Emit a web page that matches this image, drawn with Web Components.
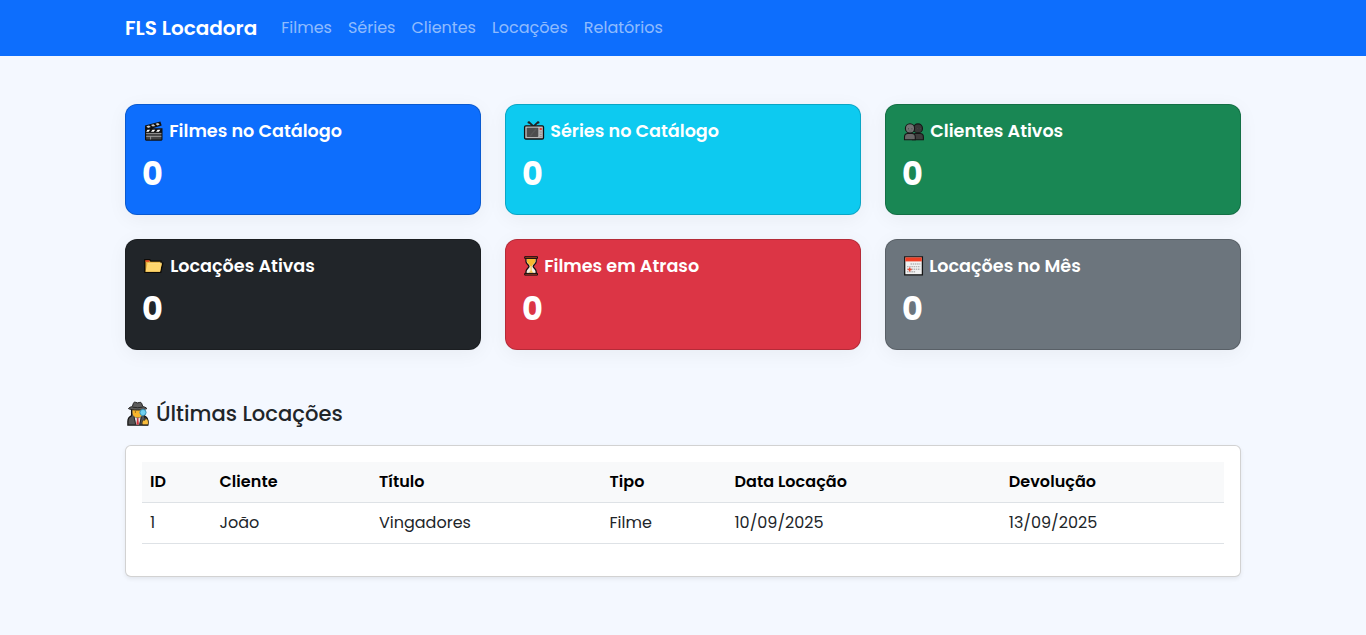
<!DOCTYPE html>
<html lang="pt-BR">
<head>
<meta charset="utf-8">
<title>FLS Locadora</title>
<style>
body{margin:0;min-height:100vh;background:#f4f8ff;color:#212529;font:400 16px/1.5 Poppins,Inter,"Open Sans",sans-serif}
</style>
</head>
<body>
<rental-dashboard></rental-dashboard>
<script>
const define = (name, html, ready) => customElements.define(name, class extends HTMLElement {
  connectedCallback() {
    if (this.shadowRoot) return;
    const t = document.createElement('template');
    t.innerHTML = html;
    this.attachShadow({mode: 'open'}).append(t.content.cloneNode(true));
    if (ready) ready(this, this.shadowRoot);
  }
});

const icons = {
  clapper: `<path d="M3 6.4 18.4 2.4l1.3 4.2-9 2.6h9.8v11.6l-1 .9H3.9l-.9-.9z" fill="#111"/><path d="M4.4 7.2 7 6.5 8.8 8.1 6 8.9zM9 6l2.5-.7 1.8 1.6-2.6.7zM13.6 4.8l2.5-.7 1.6 1.6-2.5.7z" fill="#ccc"/><path d="M5.5 10.8h2.6l-1.5 2H4.2zM10.5 10.8h2.7l-1.5 2H9zM15.6 10.8h2.8l-1.5 2h-2.8z" fill="#fff"/><path d="M4.2 14h15.2v6.5H4.2z" fill="#444"/><path d="M4.2 14.4h15.2M4.2 17.4h15.2M8.6 17.5v3" stroke="#aaa" stroke-width=".8"/>`,
  tv: `<path d="m7 3.2 4.5 4.3L16 3.2" fill="none" stroke="#222" stroke-width="1.8"/><circle cx="6.8" cy="3.4" r="1.2" fill="#222"/><circle cx="16.2" cy="3.4" r="1.2" fill="#222"/><rect x="2.6" y="6.8" width="18.9" height="13.2" rx="1.2" fill="#b8b8b8" stroke="#111" stroke-width="1.3"/><rect x="4.7" y="8.7" width="11.6" height="9.4" rx=".8" fill="#4d4d4d"/><path d="m7 17.6 6.5-8.2h1.8l-6.5 8.2z" fill="#585858"/><path d="M17.7 10h2.1" stroke="#e63a32" stroke-width="2"/><path d="M17.7 13h2.1M17.7 15.4h2.1M17.7 17.6h2.1" stroke="#888" stroke-width=".8"/>`,
  people: `<g stroke="#161616" stroke-width="1.1"><path d="M10.5 20.8v-2.7c0-2.4 1.4-3.6 3.3-3.6h4.3c2 0 3.3 1.2 3.3 3.6v2.7z" fill="#3d3d3d"/><circle cx="16" cy="9.4" r="4.5" fill="#383838"/><path d="M2.5 20.8v-2.7c0-2.4 1.4-3.6 3.3-3.6H10c2 0 3.3 1.2 3.3 3.6v2.7z" fill="#666"/><circle cx="8" cy="9.4" r="4.6" fill="#737373"/></g><path d="M6 9.8h1M9.4 9.8h1M15 9.6h1M18 9.6h1" stroke="#444" stroke-width="1"/><path d="M6.8 11.8q1.6.8 3 0" fill="none" stroke="#505050" stroke-width=".6"/>`,
  folder: `<path d="M2.8 18.4V5.8h5l1 1.3h10.3v2.1h1.6l-2 9.2z" fill="#e6ae37" stroke="#0d0a06" stroke-width="1.4"/><path d="M3.4 6.2h4v1.6h-4z" fill="#e2401f"/><path d="M5.5 9.2h14.3l-1.8 8.6H3.6z" fill="#ffd66d"/><path d="M5.5 9.2h14.3" stroke="#ffe49b" stroke-width=".8"/>`,
  hourglass: `<path d="M4 4h10.2v3.4c0 2.3-3 3.6-3 5s3 2.7 3 5v2.8H4v-2.8c0-2.3 3-3.6 3-5s-3-2.7-3-5z" fill="#f5efe6" stroke="#17110f" stroke-width="1.3"/><path d="M4.9 5h8.4v2.2c0 2.1-2.9 3.2-3.5 5H8.4c-.6-1.8-3.5-2.9-3.5-5z" fill="#f7b830"/><path d="M9.1 12v6.5" stroke="#f7c85d" stroke-width="1.3"/><path d="m9.1 16.4-2.6 2.4h5.2z" fill="#f7c34e"/><path d="M2.7 2.7h12.8v1.7H2.7zM2.7 19.4h12.8v1.7H2.7z" fill="#b83f26" stroke="#17110f" stroke-width="1"/>`,
  calendar: `<path d="M2.7 2.8h17.7v18H2.7z" fill="#f2f2f2" stroke="#151515" stroke-width="1.3"/><path d="M3.3 3.4h16.5v4H3.3z" fill="#ef3f25"/><g stroke="#b4b4b4" stroke-width="1.4" stroke-dasharray="1.5 .7"><path d="M8.5 10h9.9M5 12.6h13.4M5 15.2h13.4M5 17.8h8.2"/></g><path d="M7.7 13.5v4M5.7 15.5h4" stroke="#ec4931" stroke-width="1.3"/>`,
  detective: `<path d="M2.9 24.1v-3.6c0-3 1.2-4.6 3.2-5.4L6.6 14V7h11.8v7l1.2 1c2 .9 3.2 2.4 3.2 5v4.1z" fill="#555" stroke="#151515" stroke-width="1.3"/><path d="M7.5 7.8h10.2v3.8c0 3-2 5-5 5s-5.2-2-5.2-5z" fill="#f7b52c"/><path d="M3.4 7.6c1-1.4 2.6-1.7 3.9-2l1.1-3.3c.4-1.3 1.6-1.4 2.6-.8l1.6.4 1.7-.4c1-.5 2 0 2.4 1l1.1 3.1c1.5.4 3 .6 4.1 2-3.5 1.9-15 1.9-18.5 0z" fill="#5d5d5d" stroke="#222" stroke-width="1"/><path d="M7.5 6.2q5.2 1 10.1 0" fill="none" stroke="#222" stroke-width=".9"/><path d="M9.6 16.3 11 23.5h3.3l1.5-7.2-1.6.4-1.6.8-1.4-.8z" fill="#ddd"/><path d="m11.7 17.5 1-.5 1 .5-.3 1.3.6 4.7h-2.6l.6-4.7z" fill="#d7323d"/><path d="m9 15.8 1.7 7.8M16.4 15.8l-1.7 7.8" stroke="#222" stroke-width=".9"/><path d="M10.4 10.4v1.2" stroke="#6b4a18" stroke-width="1"/><circle cx="18" cy="11.5" r="3.1" fill="#6fd0f0" stroke="#3a93b6" stroke-width="1"/><path d="m19.4 14.7.7 2.8" stroke="#222" stroke-width="1.4"/><path d="M17.5 23.8c-.8-1.9-.4-3.8.9-4.8l1.5.2.7-2 1.7 1.1c1.4 1.7 1.5 3.9.6 5.5z" fill="#f8bd3d" stroke="#282015" stroke-width=".7"/>`
};
define('glyph-icon', `<style>:host{display:block;flex:none;width:var(--box,24px);height:25px;margin:-2px 0}svg{display:block;overflow:visible}</style><svg width="25" height="25" viewBox="0 0 25 25"></svg>`, (el, root) => {
  root.querySelector('svg').innerHTML = icons[el.getAttribute('name')];
});

define('site-nav', `<style>
:host{display:block;background:#0d6efd;height:56px}
nav{box-sizing:border-box;width:1140px;height:56px;margin:auto;padding:0 12px;display:flex;align-items:center;color:#fff}
.brand{font-size:20px;font-weight:600;margin-right:24px}
.links{display:flex;gap:16px;color:rgba(255,255,255,.55)}
</style><nav><span class="brand">FLS Locadora</span><div class="links"><span>Filmes</span><span>Séries</span><span>Clientes</span><span>Locações</span><span>Relatórios</span></div></nav>`);

define('stat-card', `<style>
:host{box-sizing:border-box;display:block;height:111px;padding:16px;border:1px solid rgba(0,0,0,.175);border-radius:12px;color:#fff;background:var(--tone);box-shadow:0 4px 20px rgba(0,0,0,.05)}
.title{display:flex;align-items:center;height:21px;margin-bottom:8px;font-size:17.6px;font-weight:600;line-height:21px}
.value{font-size:32px;font-weight:700;line-height:48px}
</style><div class="title"><slot name="icon"></slot><slot name="title"></slot></div><div class="value"><slot></slot></div>`);

define('rentals-table', `<style>
:host{box-sizing:border-box;display:block;padding:16px 16px 32px;border:1px solid rgba(0,0,0,.175);border-radius:6px;background:#fff;box-shadow:0 2px 4px rgba(0,0,0,.075)}
.row{display:grid;grid-template-columns:69.5px 159.5px 230.5px 125px 274.3px 1fr;border-bottom:1px solid #dee2e6}
.row>div{padding:8px;height:24px}
.head{background:#f8f9fa;color:#000;font-weight:600;letter-spacing:.05px}
</style>
<div class="row head"><div>ID</div><div>Cliente</div><div>Título</div><div>Tipo</div><div>Data Locação</div><div>Devolução</div></div>
<div class="row"><div>1</div><div>João</div><div>Vingadores</div><div>Filme</div><div>10/09/2025</div><div>13/09/2025</div></div>`);

const card = (tone, icon, box, title) => `<stat-card style="--tone:${tone}"><glyph-icon slot="icon" name="${icon}" style="--box:${box}px"></glyph-icon><span slot="title">${title}</span>0</stat-card>`;
define('rental-dashboard', `<style>
:host{display:block}
main{box-sizing:border-box;width:1140px;margin:auto;padding:48px 12px}
.grid{display:grid;grid-template-columns:repeat(3,1fr);gap:24px}
h4{display:flex;align-items:center;height:27px;margin:50px 0 18px;font-size:21.1px;font-weight:500;line-height:27px}
</style><site-nav></site-nav><main><div class="grid">
${card('#0d6efd','clapper',27.3,'Filmes no Catálogo')}
${card('#0dcaf0','tv',28.3,'Séries no Catálogo')}
${card('#198754','people',28.3,'Clientes Ativos')}
${card('#212529','folder',28.2,'Locações Ativas')}
${card('#dc3545','hourglass',22.2,'Filmes em Atraso')}
${card('#6c757d','calendar',27.2,'Locações no Mês')}
</div><h4><glyph-icon name="detective" style="--box:31px"></glyph-icon><span>Últimas Locações</span></h4><rentals-table></rentals-table></main>`);
</script>
</body>
</html>
